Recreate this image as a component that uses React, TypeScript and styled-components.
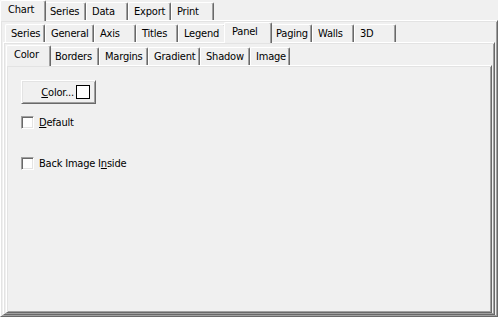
import * as React from 'react';
import styled, { createGlobalStyle } from 'styled-components';

const GlobalStyle = createGlobalStyle`
    html, body {
        margin: 0;
        padding: 0;
        background: #f0f0f0;
    }
`

const Window = styled.div`
    width: 498px;
    height: 317px;
    display: flex;
    flex-direction: column;
    background: #f0f0f0;
    font-family: 'DejaVu Sans Condensed', 'DejaVu Sans', sans-serif;
    font-stretch: condensed;
    font-size: 11px;
    letter-spacing: -0.2px;
    color: #000;
    overflow: hidden;
`

const TabRow = styled.div`
    height: 20px;
    flex: none;
    display: flex;
    align-items: flex-end;
    padding-left: 2px;
`

const Tab = styled.div<{ $w: number; $active?: boolean }>`
    box-sizing: border-box;
    position: relative;
    width: ${p => (p.$active ? p.$w + 4 : p.$w)}px;
    height: ${p => (p.$active ? 21 : 18)}px;
    margin: ${p => (p.$active ? '0 -2px -1px -2px' : '0')};
    z-index: ${p => (p.$active ? 2 : 1)};
    padding: 2px 0 0 ${p => (p.$active ? 7 : 5)}px;
    line-height: 13px;
    white-space: nowrap;
    background: #f0f0f0;
    border-top: 1px solid #fff;
    border-left: 1px solid #fff;
    border-right: 1px solid #696969;
    border-radius: 2px 2px 0 0;
    box-shadow: inset -1px 0 #a0a0a0;
`

const Panel = styled.div<{ $pt: number }>`
    box-sizing: border-box;
    flex: 1;
    min-height: 0;
    display: flex;
    flex-direction: column;
    padding: ${p => p.$pt}px 2px 1px 2px;
    border-top: 1px solid #fff;
    border-left: 1px solid #fff;
    border-right: 1px solid #696969;
    border-bottom: 1px solid #696969;
    box-shadow: inset 1px 1px #e3e3e3, inset -1px -1px #a0a0a0;
`

const Content = styled.div`
    flex: 1;
    display: flex;
    flex-direction: column;
    align-items: flex-start;
    padding: 14px 0 0 12px;
`

const Button = styled.div`
    box-sizing: border-box;
    width: 75px;
    height: 24px;
    display: flex;
    align-items: center;
    justify-content: flex-end;
    gap: 2px;
    padding-right: 5px;
    border-top: 1px solid #fff;
    border-left: 1px solid #fff;
    border-right: 1px solid #696969;
    border-bottom: 1px solid #696969;
    box-shadow: inset 1px 1px #e3e3e3, inset -1px -1px #a0a0a0;
`

const Swatch = styled.span`
    box-sizing: border-box;
    width: 14px;
    height: 14px;
    background: #fff;
    border: 1px solid #000;
`

const CheckRow = styled.div<{ $mt: number }>`
    display: flex;
    align-items: center;
    gap: 5px;
    margin-top: ${p => p.$mt}px;
    line-height: 13px;
`

const Box = styled.span`
    box-sizing: border-box;
    width: 13px;
    height: 13px;
    background: #fff;
    border-top: 1px solid #a0a0a0;
    border-left: 1px solid #a0a0a0;
    border-right: 1px solid #fff;
    border-bottom: 1px solid #fff;
    box-shadow: inset 1px 1px #696969, inset -1px -1px #e3e3e3;
`

const Key = styled.span`
    text-decoration: underline;
`

const mainTabs = [
    { label: 'Chart', w: 42 },
    { label: 'Series', w: 42 },
    { label: 'Data', w: 42 },
    { label: 'Export', w: 43 },
    { label: 'Print', w: 43 },
]

const chartTabs = [
    { label: 'Series', w: 40 },
    { label: 'General', w: 49 },
    { label: 'Axis', w: 42 },
    { label: 'Titles', w: 42 },
    { label: 'Legend', w: 48 },
    { label: 'Panel', w: 44 },
    { label: 'Paging', w: 42 },
    { label: 'Walls', w: 42 },
    { label: '3D', w: 42 },
]

const panelTabs = [
    { label: 'Color', w: 41 },
    { label: 'Borders', w: 50 },
    { label: 'Margins', w: 49 },
    { label: 'Gradient', w: 52 },
    { label: 'Shadow', w: 50 },
    { label: 'Image', w: 40 },
]

function Tabs({ items, active }: { items: { label: string; w: number }[]; active: number }) {
    return (
        <TabRow>
            {items.map((t, i) => (
                <Tab key={t.label} $w={t.w} $active={i === active}>{t.label}</Tab>
            ))}
        </TabRow>
    )
}

export default function App() {
    return (
        <Window>
            <GlobalStyle />
            <Tabs items={mainTabs} active={0} />
            <Panel $pt={1}>
                <Tabs items={chartTabs} active={5} />
                <Panel $pt={2}>
                    <Tabs items={panelTabs} active={0} />
                    <Panel $pt={0}>
                        <Content>
                            <Button>
                                <span><Key>C</Key>olor...</span>
                                <Swatch />
                            </Button>
                            <CheckRow $mt={12}>
                                <Box />
                                <span><Key>D</Key>efault</span>
                            </CheckRow>
                            <CheckRow $mt={28}>
                                <Box />
                                <span>Back Image I<Key>n</Key>side</span>
                            </CheckRow>
                        </Content>
                    </Panel>
                </Panel>
            </Panel>
        </Window>
    )
}
